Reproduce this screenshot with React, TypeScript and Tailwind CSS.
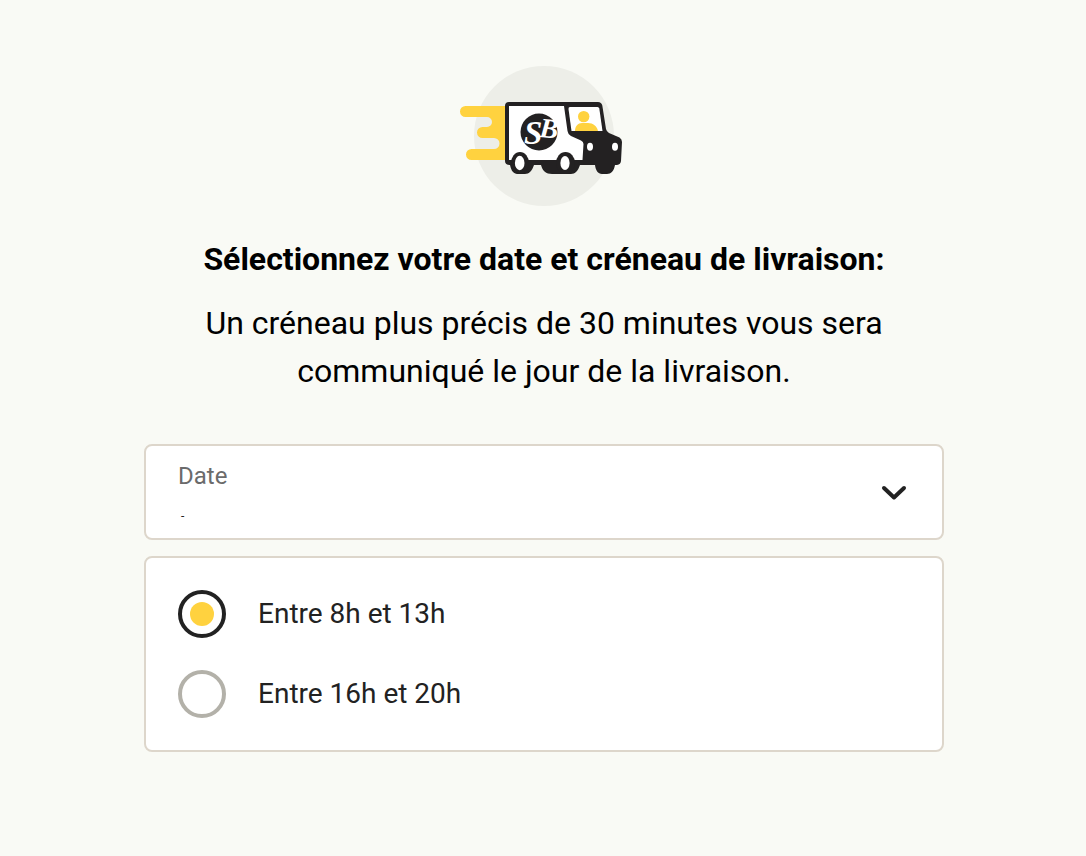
import { useState } from "react"

const slots = [
  { id: "morning", label: "Entre 8h et 13h" },
  { id: "evening", label: "Entre 16h et 20h" },
]

const DeliveryTruck = () => {
  return (
    <svg className="mx-auto h-[140px] w-[200px]" viewBox="444 66 200 140" aria-hidden="true">
      <circle cx="544" cy="136" r="70" fill="#edeee8" />
      {/* speed trail */}
      <path
        d="M507 106H465.500A5.500 5.500 0 0 0 465.500 117H487A5 5 0 0 1 487 127H482.500A5.500 5.500 0 0 0 482.500 138H494A5.500 5.500 0 0 1 494 149H471.500A5.500 5.500 0 0 0 471.500 160H507Z"
        fill="#ffd23f"
      />
      {/* bodywork and wheels */}
      <path
        d="M509 102H598Q601.500 102 602.300 105.500L606 129Q606.500 131.500 609 133L619.500 137.500Q622 139 622 142L621 161Q620.700 164.500 617 165H615C614 171 611 174 607 174H602C598 174 595.500 170 595 165H580C578 171 575 174 571 174H552C546 174 542.500 171 541 165H534C532 171 529 174 525 174H517C512 173 511 169 510 165Q505 165 505 161V106Q505 102 509 102Z"
        fill="#232122"
      />
      <path d="M509 106H564L567.500 131Q568 134.500 571 136L581 140.500Q583.500 141.500 583.500 144L582.500 160H509Z" fill="#fff" />
      <path d="M570 107H597.500Q599 107 599.300 108.500L602.500 131H571.500L568.500 109Q568.300 107 570 107Z" fill="#fff" />
      <circle cx="583.700" cy="116.600" r="5.700" fill="#ffd23f" />
      <path d="M575 131C575 126 578 123 582 123H588C593 123 597 126 598 131Z" fill="#ffd23f" />
      <ellipse cx="590" cy="146.700" rx="3" ry="4" fill="#fff" />
      <ellipse cx="615" cy="146.700" rx="3" ry="4" fill="#fff" />
      <ellipse cx="520" cy="163" rx="9" ry="11" fill="#232122" />
      <ellipse cx="565.500" cy="163" rx="9.500" ry="11" fill="#232122" />
      <ellipse cx="519.700" cy="163" rx="4.800" ry="7.200" fill="#fff" />
      <ellipse cx="565" cy="163" rx="4.600" ry="7" fill="#fff" />
      {/* badge */}
      <circle cx="539" cy="132" r="18.500" fill="#232122" />
      <g className="font-['Liberation_Serif',serif] font-bold italic" fill="#fff">
        <text x="524" y="144" fontSize="33">S</text>
        <text x="539" y="137" fontSize="28" transform="rotate(5 539 137)">B</text>
      </g>
    </svg>
  )
}

const App = () => {
  const [slot, setSlot] = useState("morning")

  return (
    <main className="min-h-screen bg-[#f9faf5] pt-[66px] pb-[104px] pl-36 pr-[142px] font-['Roboto',sans-serif] text-[#222]">
      <DeliveryTruck />
      <div className="mt-[29px] flex flex-col gap-4 text-center text-[32px] leading-[48px] text-black">
        <h1 className="font-bold">Sélectionnez votre date et créneau de livraison:</h1>
        <p className="px-12">Un créneau plus précis de 30 minutes vous sera communiqué le jour de la livraison.</p>
      </div>
      <form className="mt-[49px] flex flex-col gap-4">
        <div className="relative flex h-24 flex-col rounded-lg border-2 border-[#ddd6cb] bg-white">
          <label htmlFor="date" className="px-8 pt-3 text-2xl leading-9 text-[#6b6b6b]">Date</label>
          <select id="date" className="h-11 w-full cursor-pointer appearance-none bg-transparent px-8 text-xs outline-none">
            <option>&nbsp;-</option>
          </select>
          <svg className="pointer-events-none absolute right-8 top-1/2 size-8 -translate-y-1/2" viewBox="0 0 32 32" fill="none" aria-hidden="true">
            <path d="M6 12L16 21.500L26 12" stroke="#222" strokeWidth="4" strokeLinecap="round" strokeLinejoin="round" />
          </svg>
        </div>
        <div className="flex flex-col gap-8 rounded-lg border-2 border-[#ddd6cb] bg-white p-8">
          {slots.map((item) => (
            <label key={item.id} className="flex cursor-pointer items-center gap-8 text-[28px] leading-[48px]">
              <input
                type="radio"
                name="slot"
                value={item.id}
                checked={slot === item.id}
                onChange={() => setSlot(item.id)}
                className="grid size-12 shrink-0 appearance-none place-content-center rounded-full border-4 border-[#b3b1a9] before:size-6 before:rounded-full checked:border-[#222] checked:before:bg-[#ffd23f]"
              />
              {item.label}
            </label>
          ))}
        </div>
      </form>
    </main>
  )
}

export default App
